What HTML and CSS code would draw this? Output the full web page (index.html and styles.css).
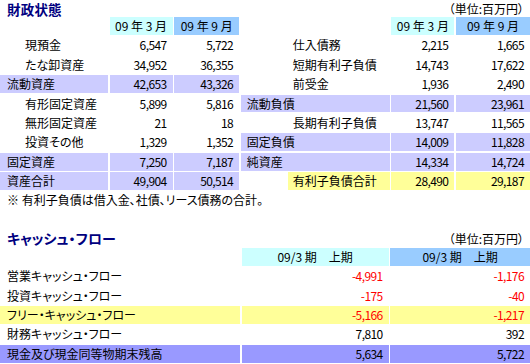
FILE: index.html
```html
<!DOCTYPE html>
<html lang="ja">
<head>
<meta charset="utf-8">
<title>財政状態</title>
<link rel="stylesheet" href="styles.css">
</head>
<body>
<div class="head top">
  <h1 class="title">財政状態</h1>
  <span class="unit">（単位:百万円）</span>
</div>
<div class="grid bs">
  <div class="c"></div><div class="c h cy">09 年 3 月</div><div class="c h bl">09 年 9 月</div>
  <div class="c"></div><div class="c h cy">09 年 3 月</div><div class="c h bl">09 年 9 月</div>

  <div class="c l2">現預金</div><div class="c n">6,547</div><div class="c n">5,722</div>
  <div class="c r2">仕入債務</div><div class="c n">2,215</div><div class="c n">1,665</div>

  <div class="c l2">たな卸資産</div><div class="c n">34,952</div><div class="c n">36,355</div>
  <div class="c r2">短期有利子負債</div><div class="c n">14,743</div><div class="c n">17,622</div>

  <div class="c l1 lv">流動資産</div><div class="c n lv">42,653</div><div class="c n lv">43,326</div>
  <div class="c r2">前受金</div><div class="c n">1,936</div><div class="c n">2,490</div>

  <div class="c l2">有形固定資産</div><div class="c n">5,899</div><div class="c n">5,816</div>
  <div class="c r1 lv">流動負債</div><div class="c n lv">21,560</div><div class="c n lv">23,961</div>

  <div class="c l2">無形固定資産</div><div class="c n">21</div><div class="c n">18</div>
  <div class="c r2">長期有利子負債</div><div class="c n">13,747</div><div class="c n">11,565</div>

  <div class="c l2">投資その他</div><div class="c n">1,329</div><div class="c n">1,352</div>
  <div class="c r1 lv">固定負債</div><div class="c n lv">14,009</div><div class="c n lv">11,828</div>

  <div class="c l1 lv">固定資産</div><div class="c n lv">7,250</div><div class="c n lv">7,187</div>
  <div class="c r1 lv">純資産</div><div class="c n lv">14,334</div><div class="c n lv">14,724</div>

  <div class="c l1 lv">資産合計</div><div class="c n lv">49,904</div><div class="c n lv">50,514</div>
  <div class="c yl ye">有利子負債合計</div><div class="c n ye">28,490</div><div class="c n ye">29,187</div>
</div>
<p class="note">※ 有利子負債は借入金、社債、リース債務の合計。</p>

<div class="head cf">
  <h2 class="title">キャッシュ・フロー</h2>
  <span class="unit">（単位:百万円）</span>
</div>
<div class="grid cfgrid">
  <div class="c"></div><div class="c h cy">09/3 期　上期</div><div class="c h bl">09/3 期　上期</div>

  <div class="c l1">営業キャッシュ・フロー</div><div class="c n neg">-4,991</div><div class="c n neg">-1,176</div>
  <div class="c l1">投資キャッシュ・フロー</div><div class="c n neg">-175</div><div class="c n neg">-40</div>
  <div class="c l1 ye">フリー・キャッシュ・フロー</div><div class="c n neg ye">-5,166</div><div class="c n neg ye">-1,217</div>
  <div class="c l1">財務キャッシュ・フロー</div><div class="c n">7,810</div><div class="c n">392</div>
  <div class="c l1 pw">現金及び現金同等物期末残高</div><div class="c n pw">5,634</div><div class="c n pw">5,722</div>
</div>
</body>
</html>
```

FILE: styles.css
```css
html, body {
  margin: 0;
  padding: 0;
  background: #ffffff;
}
body {
  width: 530px;
  overflow: hidden;
  font-family: "Noto Sans CJK JP", "Noto Sans", sans-serif;
  font-size: 12px;
  color: #000000;
  font-feature-settings: "palt";
}
.head {
  display: flex;
  justify-content: space-between;
  align-items: center;
  padding: 0 6px 0 7px;
}
.head.top {
  height: 17px;
  align-items: flex-start;
}
.head.cf {
  height: 18px;
  margin-top: 22px;
}
.title {
  margin: 0;
  font-size: 14px;
  font-weight: bold;
  line-height: 17px;
  color: #000080;
}
.head.top .title {
  font-size: 13.5px;
  line-height: 19.6px;
  letter-spacing: 0.2px;
  margin-bottom: -2.6px;
}
.unit {
  line-height: 16px;
}
.head.top .unit {
  line-height: 17.4px;
}
.grid {
  display: grid;
  column-gap: 1.6px;
  row-gap: 1.6px;
  grid-auto-rows: 17.8px;
}
.bs {
  grid-template-columns: 108px 63px 65px 149px 63px 74px;
}
.cfgrid {
  grid-template-columns: 240px 147px 1fr;
}
.c {
  line-height: 18px;
  white-space: nowrap;
  overflow: hidden;
}
.n {
  text-align: right;
  padding-right: 6px;
  letter-spacing: -0.6px;
}
.h {
  text-align: center;
}
.l1 { padding-left: 7px; }
.l2 { padding-left: 25px; }
.r1 { padding-left: 6px; }
.r2 { padding-left: 52px; }
.yl {
  margin-left: 47px;
  padding-left: 5px;
}
.cy { background: #ccffff; }
.bl { background: #99ccff; }
.lv { background: #ccccff; }
.ye { background: #ffff99; }
.pw { background: #9999ff; }
.neg { color: #ff0000; }
.note {
  margin: 0;
  padding: 2px 0 0 7px;
  line-height: 16px;
}
```
